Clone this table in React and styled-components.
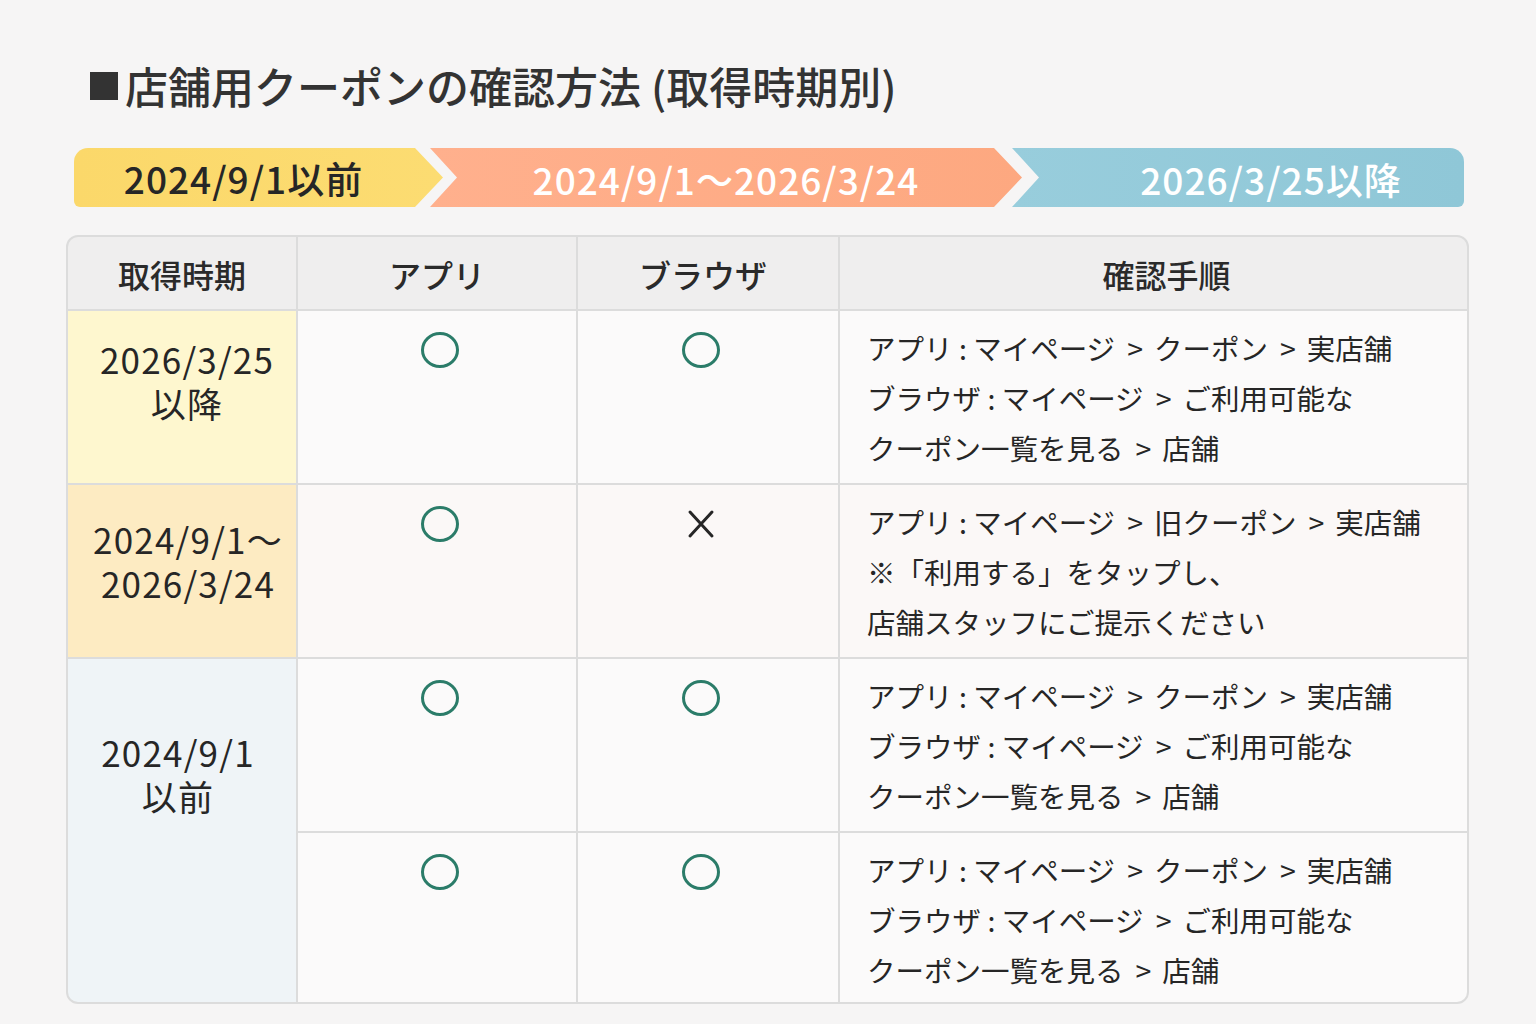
import React from "react";
import styled, { createGlobalStyle } from "styled-components";

const GlobalStyle = createGlobalStyle`
  html, body {
    margin: 0;
    padding: 0;
    background: #f6f5f5;
  }
  body {
    font-family: "Noto Sans CJK JP", "Noto Sans", sans-serif;
    color: #262626;
  }
`;

const timeline = [
  { label: "2024/9/1以前", bg: "linear-gradient(90deg, #fbd86a, #fcdc72)", color: "#262626", kind: "first", width: 369, ml: 0 },
  { label: "2024/9/1〜2026/3/24", bg: "linear-gradient(90deg, #ffb08d, #fda880)", color: "#ffffff", kind: "middle", width: 592, ml: -13 },
  { label: "2026/3/25以降", bg: "linear-gradient(90deg, #98cddc, #8fc7d7)", color: "#ffffff", kind: "last", width: 452, ml: -10 }
];

// each step line is split at the ">" separators
const STEPS_NORMAL = [
  ["アプリ : マイページ", "クーポン", "実店舗"],
  ["ブラウザ : マイページ", "ご利用可能な"],
  ["クーポン一覧を見る", "店舗"]
];

const rows = [
  {
    period: ["2026/3/25", "以降"],
    periodBg: "#fef7cf",
    periodPt: 26,
    periodShift: 10,
    span: 1,
    items: [{ app: true, browser: true, steps: STEPS_NORMAL, bg: "#fbfafa" }]
  },
  {
    period: ["2024/9/1〜", "2026/3/24"],
    periodBg: "#fdebc2",
    periodPt: 32,
    periodShift: 12,
    span: 1,
    items: [
      {
        app: true,
        browser: false,
        steps: [
          ["アプリ : マイページ", "旧クーポン", "実店舗"],
          ["※「利用する」をタップし、"],
          ["店舗スタッフにご提示ください"]
        ],
        bg: "#fbf8f7"
      }
    ]
  },
  {
    period: ["2024/9/1", "以前"],
    periodBg: "#eff4f7",
    periodPt: 71,
    periodShift: -8,
    span: 2,
    items: [
      { app: true, browser: true, steps: STEPS_NORMAL, bg: "#fbfafa" },
      { app: true, browser: true, steps: STEPS_NORMAL, bg: "#fbfafa" }
    ]
  }
];

function Circle() {
  return (
    <svg width="40" height="38" viewBox="0 0 40 38">
      <ellipse cx="20" cy="19" rx="17.5" ry="16.5" fill="none" stroke="#2b7c69" strokeWidth="3" />
    </svg>
  );
}

function Cross() {
  return (
    <svg width="40" height="38" viewBox="0 0 40 38">
      <path d="M9 7 L31 31 M31 7 L9 31" stroke="#262626" strokeWidth="3" strokeLinecap="round" />
    </svg>
  );
}

export default function App() {
  return (
    <Page>
      <GlobalStyle />
      <Title>
        <Square />
        店舗用クーポンの確認方法<Paren>(取得時期別)</Paren>
      </Title>

      <Timeline>
        {timeline.map(t => (
          <Segment key={t.label} $bg={t.bg} $color={t.color} $kind={t.kind} $width={t.width} $ml={t.ml}>
            {t.label}
          </Segment>
        ))}
      </Timeline>

      <Table>
        <HeadCell>取得時期</HeadCell>
        <HeadCell>アプリ</HeadCell>
        <HeadCell $shift={-10}>ブラウザ</HeadCell>
        <HeadCell $shift={26}>確認手順</HeadCell>

        {rows.map((row, i) => (
          <React.Fragment key={i}>
            <PeriodCell $bg={row.periodBg} $pt={row.periodPt} $span={row.span} $shift={row.periodShift}>
              {row.period[0]}
              <br />
              {row.period[1]}
            </PeriodCell>
            {row.items.map((item, j) => (
              <React.Fragment key={j}>
                <MarkCell $bg={item.bg} $shift={6}>{item.app ? <Circle /> : <Cross />}</MarkCell>
                <MarkCell $bg={item.bg} $shift={-14}>{item.browser ? <Circle /> : <Cross />}</MarkCell>
                <StepCell $bg={item.bg}>
                  {item.steps.map((parts, k) => (
                    <StepLine key={k}>
                      {parts.map((part, n) => (
                        <React.Fragment key={n}>
                          {n > 0 && <Sep>&gt;</Sep>}
                          {part}
                        </React.Fragment>
                      ))}
                    </StepLine>
                  ))}
                </StepCell>
              </React.Fragment>
            ))}
          </React.Fragment>
        ))}
      </Table>
    </Page>
  );
}

const Page = styled.div`
  width: 1403px;
  padding: 60px 0 0 66px;
`;

const Title = styled.h1`
  margin: 0 0 0 22px;
  height: 50px;
  display: flex;
  align-items: center;
  font-size: 43px;
  line-height: 50px;
  font-weight: 500;
  color: #333;
  white-space: nowrap;
`;

const Paren = styled.span`
  margin-left: 10px;
`;

const Square = styled.span`
  display: inline-block;
  width: 28px;
  height: 28px;
  background: #333;
  margin: 2px 7px 0 2px;
`;

const Timeline = styled.div`
  display: flex;
  margin: 38px 0 0 8px;
  height: 59px;
`;

const Segment = styled.div`
  flex: none;
  width: ${p => p.$width}px;
  margin-left: ${p => p.$ml}px;
  background: ${p => p.$bg};
  color: ${p => p.$color};
  display: flex;
  align-items: center;
  justify-content: center;
  font-size: 37px;
  letter-spacing: 1px;
  font-weight: 500;
  box-sizing: border-box;
  padding: ${p => (p.$kind === "first" ? "0 30px 0 0" : p.$kind === "last" ? "2px 0 0 66px" : "2px 0 0 0")};
  border-radius: ${p => (p.$kind === "first" ? "14px 0 0 6px" : p.$kind === "last" ? "0 14px 6px 0" : "0")};
  clip-path: ${p =>
    p.$kind === "first"
      ? "polygon(0 0, calc(100% - 28px) 0, 100% 50%, calc(100% - 28px) 100%, 0 100%)"
      : p.$kind === "middle"
      ? "polygon(0 0, calc(100% - 28px) 0, 100% 50%, calc(100% - 28px) 100%, 0 100%, 27px 50%)"
      : "polygon(0 0, 100% 0, 100% 100%, 0 100%, 27px 50%)"};
`;

const Table = styled.div`
  margin-top: 28px;
  display: grid;
  grid-template-columns: 228px 278px 260px 1fr;
  grid-template-rows: 72px 172px 172px 172px 169px;
  gap: 2px;
  background: #dcdcdc;
  border: 2px solid #dcdcdc;
  border-radius: 12px;
  overflow: hidden;
`;

const HeadCell = styled.div`
  background: #efeeee;
  display: flex;
  align-items: center;
  justify-content: center;
  font-size: 32px;
  font-weight: 500;
  color: #2a2a2a;
  padding-top: 2px;
  padding-left: ${p => Math.max(p.$shift || 0, 0)}px;
  padding-right: ${p => Math.max(-(p.$shift || 0), 0)}px;
`;

const PeriodCell = styled.div`
  grid-row: span ${p => p.$span};
  background: ${p => p.$bg};
  padding-top: ${p => p.$pt}px;
  padding-left: ${p => Math.max(p.$shift, 0)}px;
  padding-right: ${p => Math.max(-p.$shift, 0)}px;
  text-align: center;
  color: #262626;
  font-size: 35px;
  letter-spacing: 1.2px;
  line-height: 44px;
`;

const MarkCell = styled.div`
  background: ${p => p.$bg};
  display: flex;
  justify-content: center;
  padding-top: 20px;
  padding-left: ${p => Math.max(p.$shift, 0)}px;
  padding-right: ${p => Math.max(-p.$shift, 0)}px;
`;

const StepCell = styled.div`
  background: ${p => p.$bg};
  padding: 12px 0 0 27px;
`;

const StepLine = styled.div`
  font-size: 28.5px;
  line-height: 50px;
  color: #262626;
  white-space: nowrap;
`;

const Sep = styled.span`
  margin: 0 11px 0 12px;
`;
